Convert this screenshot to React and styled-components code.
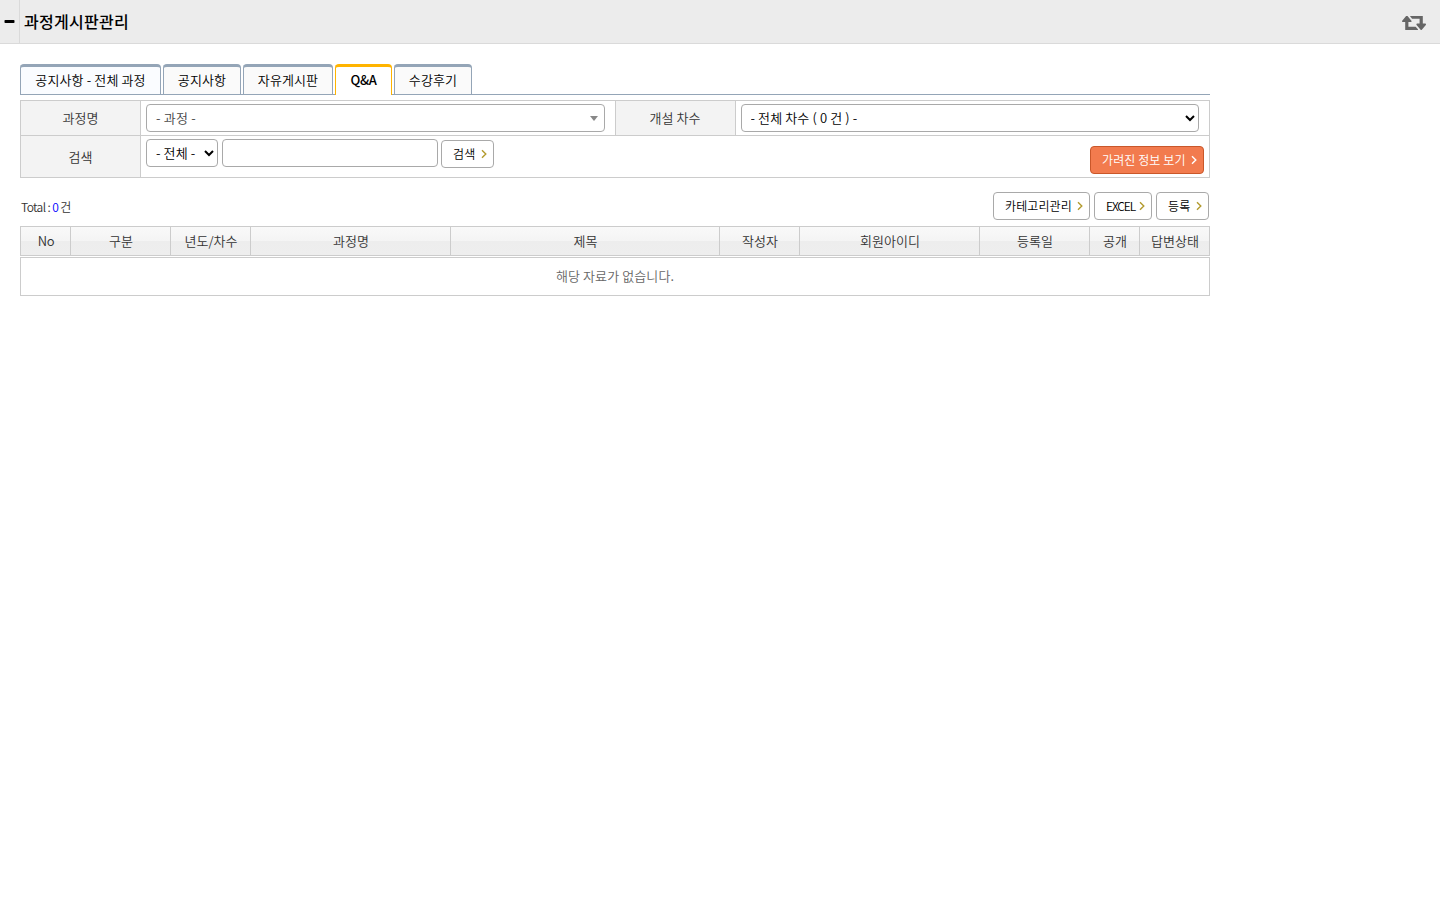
import styled, { createGlobalStyle } from 'styled-components'

const colors = {
  line: '#cccccc',
  control: '#a9a9a9',
  tab: '#94a5b7',
  active: '#ffb400',
  text: '#333333',
}

const GlobalStyle = createGlobalStyle`
  * {
    box-sizing: border-box;
  }
  body {
    margin: 0;
    background: #ffffff;
    color: ${colors.text};
    font-family: 'Noto Sans CJK KR', sans-serif;
    font-size: 13px;
    font-weight: 350;
    line-height: 18px;
  }
  select, input, button {
    font-family: inherit;
    font-weight: inherit;
  }
`

const Header = styled.header`
  display: flex;
  align-items: center;
  height: 44px;
  background: #ececec;
  border-bottom: 1px solid #dadada;
`

const MenuToggle = styled.div`
  display: flex;
  align-items: center;
  width: 20px;
  height: 43px;
  padding-left: 4px;
  border-right: 1px solid #dadada;
`

const PageTitle = styled.h1`
  flex: 1;
  margin: 0;
  padding: 0 0 2px 4px;
  color: #000000;
  font-size: 16px;
  font-weight: 500;
  letter-spacing: 0.3px;
  line-height: 22px;
`

const RefreshIcon = styled.svg`
  margin: 3px 14px 0 0;
`

const Content = styled.main`
  width: 1190px;
  margin: 20px 0 0 20px;
`

const Tabs = styled.nav`
  display: flex;
  gap: 2px;
  height: 31px;
  border-bottom: 1px solid ${colors.tab};
`

const Tab = styled.div`
  width: ${({ $width }) => $width}px;
  height: ${({ $active }) => ($active ? 31 : 30)}px;
  border: 1px solid ${({ $active }) => ($active ? colors.active : colors.tab)};
  border-top-width: 3px;
  border-bottom: 0;
  border-radius: 4px 4px 0 0;
  background: ${({ $active, $tint }) =>
    $active ? '#ffffff' : $tint ? '#fafcff' : '#fafafa'};
  color: #000000;
  font-weight: ${({ $active }) => ($active ? 500 : 350)};
  letter-spacing: ${({ $active }) => ($active ? -0.3 : 0.12)}px;
  line-height: 26px;
  text-align: center;
  white-space: nowrap;
`

const SearchForm = styled.section`
  margin-top: 5px;
  border: 1px solid ${colors.line};
`

const SearchRow = styled.div`
  display: flex;
  height: ${({ $height }) => $height}px;

  & + & {
    border-top: 1px solid ${colors.line};
  }
`

const Label = styled.div`
  display: flex;
  align-items: center;
  justify-content: center;
  width: ${({ $divided }) => ($divided ? 121 : 120)}px;
  border-right: 1px solid ${colors.line};
  border-left: ${({ $divided }) =>
    $divided ? `1px solid ${colors.line}` : '0'};
  background: #f3f3f3;
  letter-spacing: 0.1px;
`

const Field = styled.div`
  display: flex;
  flex: 1;
  align-items: flex-start;
  padding: 3px 5px;
`

const Combo = styled.div`
  display: flex;
  align-items: center;
  justify-content: space-between;
  width: 459px;
  height: 28px;
  padding: 0 6px 0 9px;
  border: 1px solid ${colors.control};
  border-radius: 4px;
  color: #444444;
  letter-spacing: 0.2px;
`

const Caret = styled.span`
  border: 4px solid transparent;
  border-top: 5px solid #888888;
  border-bottom: 0;
`

const Select = styled.select`
  width: ${({ $width }) => $width}px;
  height: 28px;
  padding: 0 0 1px 5px;
  border: 1px solid ${colors.control};
  border-radius: 4px;
  background: #ffffff;
  color: #000000;
  font-size: 13px;
  letter-spacing: 0.12px;
`

const TextInput = styled.input`
  width: 216px;
  height: 28px;
  margin-left: 4px;
  border: 1px solid ${colors.control};
  border-radius: 4px;
`

const Button = styled.button`
  display: flex;
  align-items: center;
  justify-content: space-between;
  width: ${({ $width }) => $width}px;
  height: 28px;
  padding: 0 6px 0 11px;
  border: 1px solid ${({ $primary }) => ($primary ? '#c9572a' : colors.control)};
  border-radius: 4px;
  background: ${({ $primary }) => ($primary ? '#f27b4e' : '#ffffff')};
  color: ${({ $primary }) => ($primary ? '#ffffff' : '#000000')};
  font-size: 12px;
  letter-spacing: ${({ $tracking = 0.1 }) => $tracking}px;
  line-height: 18px;
  white-space: nowrap;
`

const SearchButton = styled(Button)`
  margin: 1px 0 0 3px;
`

const RevealButton = styled(Button)`
  margin: 7px 0 0 auto;
`

const Toolbar = styled.div`
  display: flex;
  gap: 4px;
  align-items: center;
  margin-top: 14px;
  padding: 0 1px;
`

const Total = styled.div`
  flex: 1;
  padding-top: 2px;
  font-size: 12px;
  letter-spacing: -0.6px;

  & > b {
    color: #0000ff;
    font-weight: 350;
  }
`

const Columns = styled.div`
  display: grid;
  grid-template-columns: 50px 100px 80px 200px 269px 80px 180px 110px 50px 69px;
  height: 30px;
  margin-top: 6px;
  border: 1px solid ${colors.line};
  background: linear-gradient(#f9f9f9, #f4f4f4 50%, #ededed 50%, #eeeeee);
`

const Column = styled.div`
  padding-left: 1px;
  border-right: 1px solid ${colors.line};
  line-height: 28px;
  text-align: center;
  white-space: nowrap;

  &:first-child {
    letter-spacing: -0.4px;
  }

  &:last-child {
    border-right: 0;
  }
`

const EmptyRow = styled.div`
  height: 39px;
  margin-top: 1px;
  border: 1px solid ${colors.line};
  color: #666666;
  letter-spacing: 0.1px;
  line-height: 36px;
  text-align: center;
`

const tabs = [
  { label: '공지사항 - 전체 과정', width: 141, tint: true },
  { label: '공지사항', width: 78 },
  { label: '자유게시판', width: 90 },
  { label: 'Q&A', width: 57, active: true },
  { label: '수강후기', width: 78 },
]

const columns = [
  'No',
  '구분',
  '년도/차수',
  '과정명',
  '제목',
  '작성자',
  '회원아이디',
  '등록일',
  '공개',
  '답변상태',
]

function Arrow({ color = '#b39b2e' }) {
  return (
    <svg width="6" height="10" viewBox="0 0 6 10" fill="none">
      <path d="M1 1.2 4.8 5 1 8.8" stroke={color} strokeWidth="1.4" />
    </svg>
  )
}

function App() {
  return (
    <>
      <GlobalStyle />
      <Header>
        <MenuToggle>
          <svg width="11" height="3" viewBox="0 0 11 3">
            <rect x="0.5" width="10" height="3" rx="0.8" fill="#000000" />
          </svg>
        </MenuToggle>
        <PageTitle>과정게시판관리</PageTitle>
        <RefreshIcon width="24" height="14" viewBox="0 0 1920 1120">
          <g transform="matrix(1 0 0 -1 0 1120)" fill="#666666">
            <path d="M1280 32q0 -13 -9.5 -22.5t-22.5 -9.5h-960q-8 0 -13.5 2t-9 7t-5.5 8t-3 11.5t-1 11.5v13v11v160v416h-192q-26 0 -45 19t-19 45q0 24 15 41l320 384q19 22 49 22t49 -22l320 -384q15 -17 15 -41q0 -26 -19 -45t-45 -19h-192v-384h576q16 0 25 -11l160 -192q7 -10 7 -21z" />
            <path d="M1920 448q0 -24 -15 -41l-320 -384q-20 -23 -49 -23t-49 23l-320 384q-15 17 -15 41q0 26 19 45t45 19h192v384h-576q-16 0 -25 12l-160 192q-7 9 -7 20q0 13 9.5 22.5t22.5 9.5h960q8 0 13.5 -2t9 -7t5.5 -8t3 -11.5t1 -11.5v-13v-11v-160v-416h192q26 0 45 -19t19 -45z" />
          </g>
        </RefreshIcon>
      </Header>
      <Content>
        <Tabs>
          {tabs.map(({ label, width, active, tint }) => (
            <Tab key={label} $width={width} $active={active} $tint={tint}>
              {label}
            </Tab>
          ))}
        </Tabs>
        <SearchForm>
          <SearchRow $height={34}>
            <Label>과정명</Label>
            <Field>
              <Combo>
                - 과정 -
                <Caret />
              </Combo>
            </Field>
            <Label $divided>개설 차수</Label>
            <Field>
              <Select $width={458}>
                <option>- 전체 차수 ( 0 건 ) -</option>
              </Select>
            </Field>
          </SearchRow>
          <SearchRow $height={42}>
            <Label>검색</Label>
            <Field>
              <Select $width={72}>
                <option>- 전체 -</option>
              </Select>
              <TextInput type="text" />
              <SearchButton $width={53}>
                검색
                <Arrow />
              </SearchButton>
              <RevealButton $width={114} $primary>
                가려진 정보 보기
                <Arrow color="#ffffff" />
              </RevealButton>
            </Field>
          </SearchRow>
        </SearchForm>
        <Toolbar>
          <Total>
            Total : <b>0</b> 건
          </Total>
          <Button $width={97}>
            카테고리관리
            <Arrow />
          </Button>
          <Button $width={58} $tracking={-1.1}>
            EXCEL
            <Arrow />
          </Button>
          <Button $width={53}>
            등록
            <Arrow />
          </Button>
        </Toolbar>
        <Columns>
          {columns.map((column) => (
            <Column key={column}>{column}</Column>
          ))}
        </Columns>
        <EmptyRow>해당 자료가 없습니다.</EmptyRow>
      </Content>
    </>
  )
}

export default App
